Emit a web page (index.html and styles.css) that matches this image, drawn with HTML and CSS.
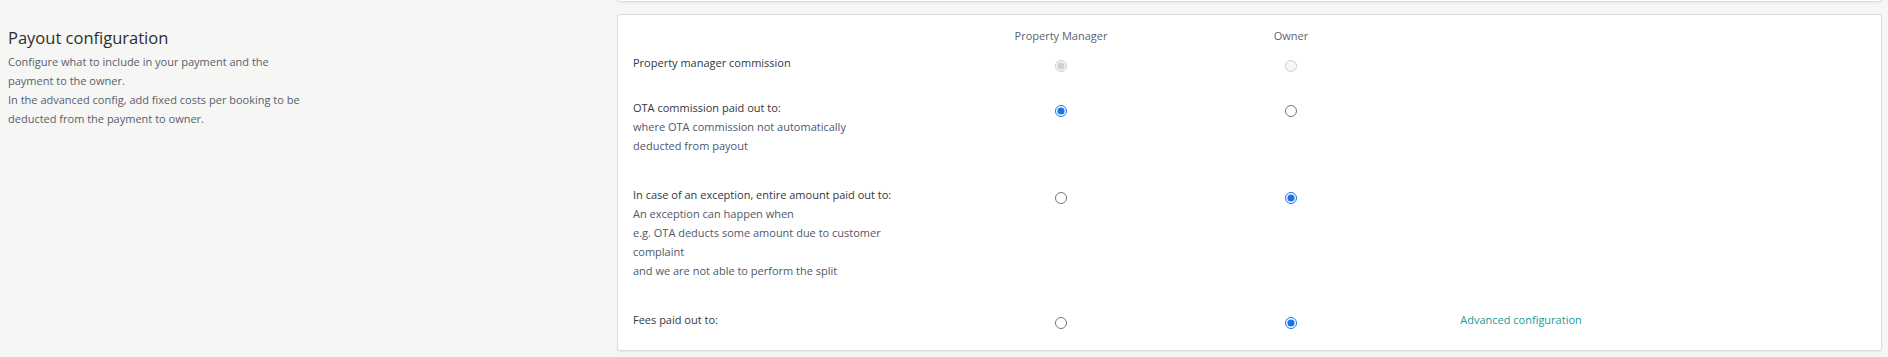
FILE: index.html
```html
<!DOCTYPE html>
<html lang="en">
<head>
    <meta charset="UTF-8">
    <title>Payout configuration</title>
    <link rel="stylesheet" href="styles.css">
</head>
<body>
    <div class="page">
        <div class="intro">
            <h2>Payout configuration</h2>
            <p>Configure what to include in your payment and the<br>payment to the owner.<br>In the advanced config, add fixed costs per booking to be<br>deducted from the payment to owner.</p>
        </div>

        <div class="main">
            <div class="card card-prev"></div>

            <div class="card payout">
                <div class="row head">
                    <div></div>
                    <div class="col">Property Manager</div>
                    <div class="col">Owner</div>
                    <div></div>
                    <div></div>
                </div>

                <div class="row row-first">
                    <div class="label">Property manager commission</div>
                    <div class="col"><input type="radio" name="pm_commission" checked disabled></div>
                    <div class="col"><input type="radio" name="pm_commission" disabled></div>
                    <div></div>
                    <div></div>
                </div>

                <div class="row">
                    <div class="label">OTA commission paid out to:
                        <span class="hint">where OTA commission not automatically<br>deducted from payout</span>
                    </div>
                    <div class="col"><input type="radio" name="ota_commission" checked></div>
                    <div class="col"><input type="radio" name="ota_commission"></div>
                    <div></div>
                    <div></div>
                </div>

                <div class="row">
                    <div class="label">In case of an exception, entire amount paid out to:
                        <span class="hint">An exception can happen when<br>e.g. OTA deducts some amount due to customer<br>complaint<br>and we are not able to perform the split</span>
                    </div>
                    <div class="col"><input type="radio" name="exception"></div>
                    <div class="col"><input type="radio" name="exception" checked></div>
                    <div></div>
                    <div></div>
                </div>

                <div class="row">
                    <div class="label">Fees paid out to:</div>
                    <div class="col"><input type="radio" name="fees"></div>
                    <div class="col"><input type="radio" name="fees" checked></div>
                    <div class="col"><a href="#" class="advanced">Advanced configuration</a></div>
                    <div></div>
                </div>
            </div>
        </div>
    </div>
</body>
</html>
```

FILE: styles.css
```css
body {
    font-family: "Open Sans", Arial, sans-serif;
    background-color: #f6f6f4;
    color: #3d4148;
    margin: 0;
    padding: 0;
}
.page {
    display: flex;
    height: 357px;
    overflow: hidden;
}
.intro {
    width: 609px;
    padding-left: 8px;
    padding-top: 26px;
}
.intro h2 {
    font-size: 16.5px;
    font-weight: 400;
    color: #2b2f33;
    margin: 0 0 2px;
    line-height: 24px;
}
.intro p {
    font-size: 11px;
    line-height: 19px;
    color: #59606c;
    margin: 0;
}
.main {
    flex: 1;
    padding-right: 6px;
}
.card {
    background: white;
    border: 1px solid #dcdcdc;
    border-radius: 3px;
    box-shadow: 0px 1px 2px 0px rgba(0, 0, 0, 0.06);
}
.card-prev {
    height: 2px;
    border-top: none;
    border-radius: 0 0 3px 3px;
    margin-top: -1px;
    margin-bottom: 12px;
}
.payout {
    padding: 11px 15px 0;
    height: 337px;
    box-sizing: border-box;
}
.row {
    display: grid;
    grid-template-columns: 313px repeat(4, 1fr);
    font-size: 11px;
    line-height: 19px;
    padding: 8px 0 22px;
}
.row.head {
    padding: 0;
    color: #5a6373;
}
.row.row-first {
    padding-bottom: 18px;
}
.label {
    color: #33373d;
}
.hint {
    display: block;
    color: #4f5869;
}
.col {
    text-align: center;
}
input[type="radio"] {
    display: block;
    width: 12px;
    height: 12px;
    margin: 7px auto 0;
    accent-color: #1a73e8;
}
.advanced {
    color: #21999a;
    text-decoration: none;
}
```
